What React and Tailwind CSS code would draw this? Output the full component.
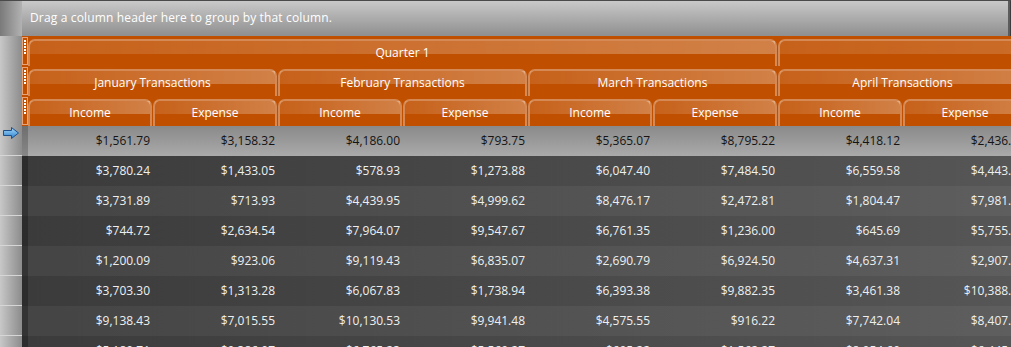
import React from "react";

const rows = [
  ["$1,561.79", "$3,158.32", "$4,186.00", "$793.75", "$5,365.07", "$8,795.22", "$4,418.12", "$2,436.58"],
  ["$3,780.24", "$1,433.05", "$578.93", "$1,273.88", "$6,047.40", "$7,484.50", "$6,559.58", "$4,443.91"],
  ["$3,731.89", "$713.93", "$4,439.95", "$4,999.62", "$8,476.17", "$2,472.81", "$1,804.47", "$7,981.24"],
  ["$744.72", "$2,634.54", "$7,964.07", "$9,547.67", "$6,761.35", "$1,236.00", "$645.69", "$5,755.06"],
  ["$1,200.09", "$923.06", "$9,119.43", "$6,835.07", "$2,690.79", "$6,924.50", "$4,637.31", "$2,907.43"],
  ["$3,703.30", "$1,313.28", "$6,067.83", "$1,738.94", "$6,393.38", "$9,882.35", "$3,461.38", "$10,388.72"],
  ["$9,138.43", "$7,015.55", "$10,130.53", "$9,941.48", "$4,575.55", "$916.22", "$7,742.04", "$8,407.15"],
  ["$5,189.71", "$9,386.07", "$6,765.23", "$5,569.27", "$695.22", "$1,562.27", "$8,954.60", "$6,445.39"],
];

const months = ["January Transactions", "February Transactions", "March Transactions", "April Transactions"];

function Indicator() {
  return (
    <div className="w-[6px] shrink-0 h-[28px] mt-[1px] border border-[#e8a477] flex flex-col items-center gap-[1px] pt-[2px]">
      {[0, 1, 2, 3, 4].map((i) => (
        <div key={i} className="w-[2px] h-[2px] bg-white" />
      ))}
    </div>
  );
}

function HeaderCell({ width, label }) {
  return (
    <div className="shrink-0 pr-[1px]" style={{ width }}>
      <div className="h-[27px] mt-[3px] rounded-t-[7px] border-2 border-b-0 border-[#ffffff55] bg-[linear-gradient(to_right,rgba(255,255,255,0.1),rgba(255,255,255,0.28))] bg-[length:100%_13px] bg-no-repeat flex items-center justify-center pb-[2px] text-white text-[12px] font-medium leading-none whitespace-nowrap">
        {label}
      </div>
    </div>
  );
}

function RowArrow() {
  return (
    <svg width="16" height="12" viewBox="0 0 16 12">
      <defs>
        <linearGradient id="arr" x1="0" y1="0" x2="0" y2="1">
          <stop offset="0" stopColor="#a8dcff" />
          <stop offset="1" stopColor="#2a7fc8" />
        </linearGradient>
      </defs>
      <polygon points="0.5,3.5 8.5,3.5 8.5,0.5 15.5,6 8.5,11.5 8.5,8.5 0.5,8.5" fill="url(#arr)" stroke="#1c4f8c" strokeWidth="1" />
    </svg>
  );
}

export default function App() {
  return (
    <div className="w-[1011px] h-[347px] overflow-hidden flex border-t border-[#4a4a4a] font-['Open_Sans',sans-serif] bg-[#3c3c3c]">
      {/* Row headers */}
      <div className="w-[22px] shrink-0 flex flex-col">
        <div className="h-[35px] shrink-0 bg-gradient-to-r from-[#7a7a7a] to-[#b2b2b2]" />
        <div className="h-[90px] shrink-0 bg-gradient-to-r from-[#c8c8c8] to-[#8c8c8c]" />
        {rows.map((_, i) => (
          <div key={i} className="h-[30px] shrink-0 border-b border-[#d6d6d6] bg-gradient-to-r from-[#c8c8c8] to-[#8c8c8c] flex items-start pt-[1px] pl-[3px]">
            {i === 0 && <RowArrow />}
          </div>
        ))}
      </div>

      <div className="flex-1 min-w-0 flex flex-col">
        {/* Group panel */}
        <div className="h-[35px] shrink-0 bg-gradient-to-b from-[#c9c9c9] to-[#8f8f8f] border-r-2 border-[#5c5c5c] mr-[1px] flex items-center pl-2 pb-[2px] text-white text-[12px] font-medium tracking-[0.15px]">
          Drag a column header here to group by that column.
        </div>

        {/* Column headers */}
        <div className="h-[90px] shrink-0 bg-[#c05000] flex flex-col">
          <div className="h-[30px] flex">
            <Indicator />
            <HeaderCell width={750} label="Quarter 1" />
            <HeaderCell width={750} label="" />
          </div>
          <div className="h-[30px] flex">
            <Indicator />
            {months.map((m) => (
              <HeaderCell key={m} width={250} label={m} />
            ))}
          </div>
          <div className="h-[30px] flex">
            <Indicator />
            {months.map((m) => (
              <React.Fragment key={m}>
                <HeaderCell width={125} label="Income" />
                <HeaderCell width={125} label="Expense" />
              </React.Fragment>
            ))}
          </div>
        </div>

        {/* Data rows */}
        <div className="flex-1 bg-gradient-to-r from-[#3b3b3b] to-[#565656]">
          {rows.map((r, i) => {
            const current = i === 0;
            const light = i > 0 && i % 2 === 0;
            return (
              <div
                key={i}
                className={
                  "h-[30px] flex text-[12px] font-medium " +
                  (current
                    ? "bg-gradient-to-b from-[#8a8a8a] to-[#aaaaaa] text-[#141414]"
                    : light
                    ? "bg-[#ffffff0d] text-[#eef0f0]"
                    : "text-[#eef0f0]")
                }
              >
                <div className={"w-[6px] shrink-0 " + (current ? "bg-[#00000033]" : "bg-[#00000040]")} />
                {r.map((v, j) => (
                  <div key={j} className="w-[125px] shrink-0 text-right pr-[3px] leading-[30px] whitespace-nowrap">
                    {v}
                  </div>
                ))}
              </div>
            );
          })}
        </div>
      </div>
    </div>
  );
}
